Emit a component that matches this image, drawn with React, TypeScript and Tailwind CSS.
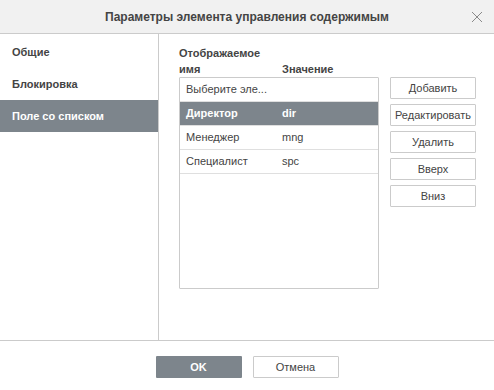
import React, { useState } from 'react';

const tabs = ['Общие', 'Блокировка', 'Поле со списком'];

const rows = [
  { name: 'Выберите эле...', value: '' },
  { name: 'Директор', value: 'dir' },
  { name: 'Менеджер', value: 'mng' },
  { name: 'Специалист', value: 'spc' },
];

const actions = ['Добавить', 'Редактировать', 'Удалить', 'Вверх', 'Вниз'];

const App: React.FC = () => {
  const [tab, setTab] = useState(2);
  const [selected, setSelected] = useState(1);

  return (
    <div
      className="w-[494px] h-[390px] bg-white flex flex-col text-[11px] text-[#444]"
      style={{ fontFamily: '"Liberation Sans", Arial, sans-serif' }}
    >
      {/* Header */}
      <div className="h-[34px] bg-[#f1f1f1] border-b border-[#cbcbcb] flex items-center justify-center relative shrink-0">
        <span className="text-[12px] font-bold text-[#444]">Параметры элемента управления содержимым</span>
        <button className="absolute right-[11px] top-[11px] w-[12px] h-[12px] flex items-center justify-center">
          <svg width="12" height="12" viewBox="0 0 12 12">
            <path d="M1 1L11 11M11 1L1 11" stroke="#8a8a8a" strokeWidth="1" />
          </svg>
        </button>
      </div>

      {/* Body */}
      <div className="flex h-[307px] border-b border-[#cbcbcb] shrink-0">
        {/* Sidebar */}
        <div className="w-[159px] border-r border-[#cbcbcb] pt-[2px] shrink-0">
          {tabs.map((t, i) => (
            <div
              key={t}
              onClick={() => setTab(i)}
              className={`h-[32px] flex items-center pl-[12px] font-bold cursor-pointer ${
                tab === i ? 'bg-[#7d858c] text-white' : 'text-[#444]'
              }`}
            >
              {t}
            </div>
          ))}
        </div>

        {/* Content */}
        <div className="pl-[20px] pt-[11px] flex-1">
          <div className="flex font-bold leading-[16px] w-[200px]">
            <div className="w-[103px]">
              Отображаемое
              <br />
              имя
            </div>
            <div className="self-end">Значение</div>
          </div>
          <div className="flex gap-[11px]">
            <div className="w-[200px] h-[212px] border border-[#cbcbcb] rounded-[1px]">
              {rows.map((r, i) => (
                <div
                  key={r.name}
                  onClick={() => setSelected(i)}
                  className={`h-[24px] flex items-center border-b border-[#dfdfdf] cursor-pointer ${
                    selected === i ? 'bg-[#7d858c] text-white font-bold' : 'text-[#444]'
                  }`}
                >
                  <span className="w-[102px] pl-[6px]">{r.name}</span>
                  <span>{r.value}</span>
                </div>
              ))}
            </div>
            <div className="flex flex-col gap-[5px]">
              {actions.map((a) => (
                <button
                  key={a}
                  className="w-[86px] h-[22px] border border-[#cbcbcb] rounded-[1px] bg-white text-[#444] text-[11px]"
                >
                  {a}
                </button>
              ))}
            </div>
          </div>
        </div>
      </div>

      {/* Footer */}
      <div className="flex justify-center gap-[11px] pt-[15px]">
        <button className="w-[86px] h-[22px] bg-[#7d858c] text-white font-bold rounded-[1px]">OK</button>
        <button className="w-[86px] h-[22px] border border-[#cbcbcb] bg-white text-[#444] rounded-[1px]">
          Отмена
        </button>
      </div>
    </div>
  );
};

export default App;
